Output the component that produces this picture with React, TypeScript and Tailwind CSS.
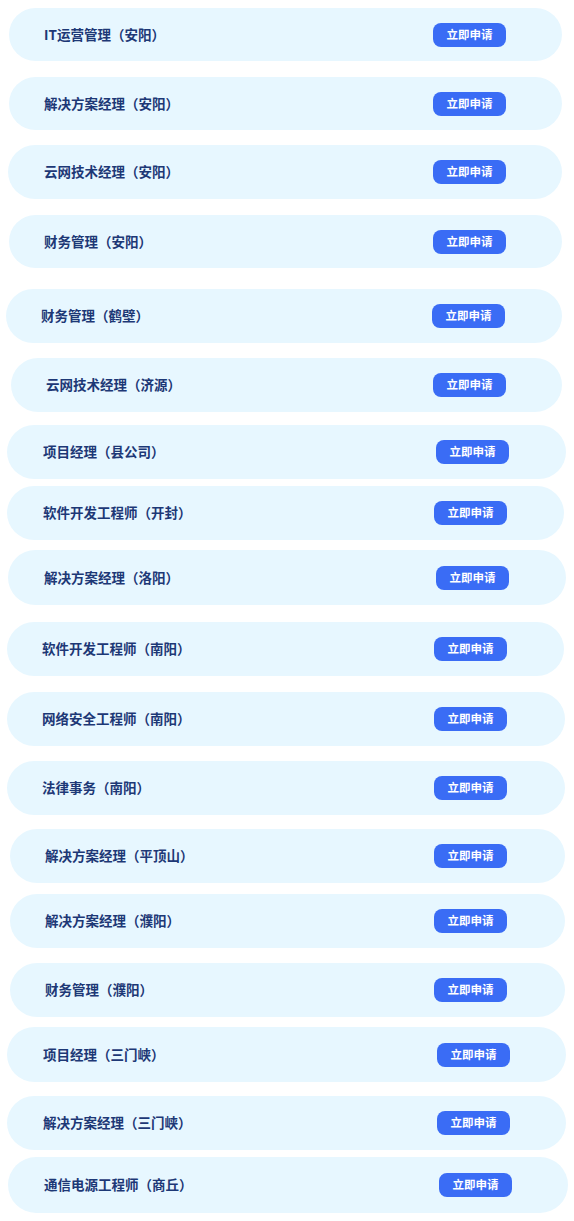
type Job = {
  title: string;
  // card box: top gap, left offset, width, height
  box: string;
  // left padding before the title
  pad: string;
  // left edge of the button, measured from the card's left edge
  btn: string;
};

const jobs: Job[] = [
  { title: "IT运营管理（安阳）", box: "mt-[8px] ml-[9px] w-[553px] h-[53px]", pad: "pl-[35px]", btn: "ml-[424px]" },
  { title: "解决方案经理（安阳）", box: "mt-[16px] ml-[9px] w-[553px] h-[53px]", pad: "pl-[35px]", btn: "ml-[424px]" },
  { title: "云网技术经理（安阳）", box: "mt-[15px] ml-[8px] w-[554px] h-[54px]", pad: "pl-[36px]", btn: "ml-[425px]" },
  { title: "财务管理（安阳）", box: "mt-[16px] ml-[9px] w-[553px] h-[53px]", pad: "pl-[35px]", btn: "ml-[424px]" },
  { title: "财务管理（鹤壁）", box: "mt-[21px] ml-[6px] w-[556px] h-[54px]", pad: "pl-[35px]", btn: "ml-[426px]" },
  { title: "云网技术经理（济源）", box: "mt-[15px] ml-[11px] w-[551px] h-[54px]", pad: "pl-[35px]", btn: "ml-[422px]" },
  { title: "项目经理（县公司）", box: "mt-[13px] ml-[7px] w-[559px] h-[54px]", pad: "pl-[36px]", btn: "ml-[429px]" },
  { title: "软件开发工程师（开封）", box: "mt-[7px] ml-[7px] w-[557px] h-[54px]", pad: "pl-[36px]", btn: "ml-[427px]" },
  { title: "解决方案经理（洛阳）", box: "mt-[10px] ml-[8px] w-[558px] h-[55px]", pad: "pl-[36px]", btn: "ml-[428px]" },
  { title: "软件开发工程师（南阳）", box: "mt-[17px] ml-[7px] w-[557px] h-[54px]", pad: "pl-[35px]", btn: "ml-[427px]" },
  { title: "网络安全工程师（南阳）", box: "mt-[16px] ml-[7px] w-[558px] h-[54px]", pad: "pl-[35px]", btn: "ml-[427px]" },
  { title: "法律事务（南阳）", box: "mt-[15px] ml-[7px] w-[558px] h-[54px]", pad: "pl-[35px]", btn: "ml-[427px]" },
  { title: "解决方案经理（平顶山）", box: "mt-[14px] ml-[10px] w-[555px] h-[54px]", pad: "pl-[35px]", btn: "ml-[424px]" },
  { title: "解决方案经理（濮阳）", box: "mt-[11px] ml-[10px] w-[555px] h-[54px]", pad: "pl-[35px]", btn: "ml-[424px]" },
  { title: "财务管理（濮阳）", box: "mt-[15px] ml-[10px] w-[555px] h-[54px]", pad: "pl-[35px]", btn: "ml-[424px]" },
  { title: "项目经理（三门峡）", box: "mt-[10px] ml-[7px] w-[559px] h-[55px]", pad: "pl-[36px]", btn: "ml-[430px]" },
  { title: "解决方案经理（三门峡）", box: "mt-[14px] ml-[7px] w-[559px] h-[54px]", pad: "pl-[36px]", btn: "ml-[430px]" },
  { title: "通信电源工程师（商丘）", box: "mt-[7px] ml-[8px] w-[560px] h-[56px]", pad: "pl-[36px]", btn: "ml-[431px]" },
];

function JobCard({ job }: { job: Job }) {
  return (
    <div className={`relative flex items-center rounded-full bg-[#e7f7ff] ${job.box}`}>
      <p className={`text-[13.5px] font-bold leading-none text-[#1d3876] ${job.pad}`}>{job.title}</p>
      <button
        className={`absolute left-0 top-1/2 -translate-y-1/2 flex h-[24px] w-[73px] items-center justify-center rounded-[8px] bg-[#3a6cf5] text-[11.5px] font-bold leading-none text-white ${job.btn}`}
      >
        立即申请
      </button>
    </div>
  );
}

export default function App() {
  return (
    <div
      className="flex min-h-[1221px] w-[574px] flex-col bg-white"
      style={{ fontFamily: '"Noto Sans CJK SC", "Noto Sans", sans-serif' }}
    >
      {jobs.map((job) => (
        <JobCard key={job.title} job={job} />
      ))}
    </div>
  );
}
